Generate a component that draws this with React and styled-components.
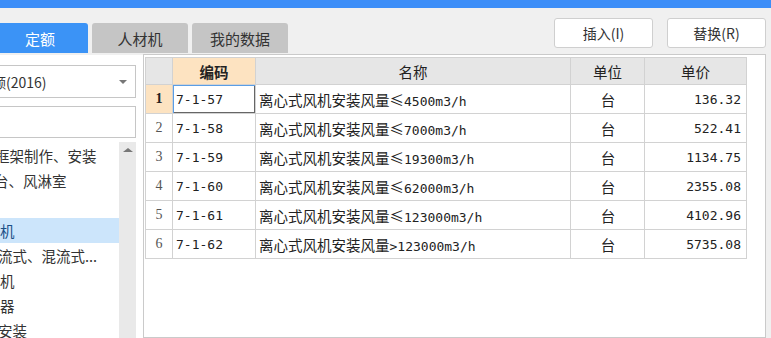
import React from "react"
import styled, { createGlobalStyle } from "styled-components"

const GlobalStyle = createGlobalStyle`
  html, body {
    margin: 0;
    padding: 0;
    background: #f0f0f0;
    overflow: hidden;
  }
  body {
    font-family: "Noto Sans CJK SC", "Liberation Sans", sans-serif;
    color: #222;
  }
`

const CJK = `"Noto Sans CJK SC", sans-serif`
const MIXED = `"DejaVu Sans Mono", "Noto Sans CJK SC", monospace`

/* --- data --- */
const rows = [
  { code: "7-1-57", name: "离心式风机安装风量≤4500m3/h", unit: "台", price: "136.32" },
  { code: "7-1-58", name: "离心式风机安装风量≤7000m3/h", unit: "台", price: "522.41" },
  { code: "7-1-59", name: "离心式风机安装风量≤19300m3/h", unit: "台", price: "1134.75" },
  { code: "7-1-60", name: "离心式风机安装风量≤62000m3/h", unit: "台", price: "2355.08" },
  { code: "7-1-61", name: "离心式风机安装风量≤123000m3/h", unit: "台", price: "4102.96" },
  { code: "7-1-62", name: "离心式风机安装风量>123000m3/h", unit: "台", price: "5735.08" },
]

const treeItems = [
  { text: "框架制作、安装", shift: -5 },
  { text: "台、风淋室", shift: -6 },
  { text: "", shift: 0 },
  { text: "机", shift: 0, active: true },
  { text: "流式、混流式...", shift: -2 },
  { text: "机", shift: 0 },
  { text: "器", shift: 0 },
  { text: "安装", shift: -2 },
]

/* --- layout --- */
const Page = styled.div`
  width: 771px;
  height: 338px;
  display: flex;
  flex-direction: column;
  overflow: hidden;
`
const TopBar = styled.div`
  height: 8px;
  background: #3d8ef8;
  flex: none;
`
const Toolbar = styled.div`
  height: 46px;
  flex: none;
  display: flex;
  justify-content: space-between;
  align-items: flex-start;
`
const Tabs = styled.div`
  display: flex;
  gap: 4px;
  margin-left: -8px;
  padding-top: 15px;
`
const Tab = styled.div`
  width: 96px;
  height: 30px;
  border-radius: 3px 3px 0 0;
  display: flex;
  align-items: center;
  justify-content: center;
  font-family: ${CJK};
  font-size: 15px;
  background: ${p => (p.active ? "#3b93f6" : "#c5c5c5")};
  color: ${p => (p.active ? "#fff" : "#333")};
`
const Actions = styled.div`
  display: flex;
  gap: 14px;
  padding-top: 10px;
  padding-right: 5px;
`
const Button = styled.div`
  width: 97px;
  height: 28px;
  border: 1px solid #cfcfcf;
  border-radius: 3px;
  background: #fff;
  display: flex;
  align-items: center;
  justify-content: center;
  font-family: ${CJK};
  font-size: 14px;
  color: #333;
`
const Body = styled.div`
  flex: 1;
  display: flex;
  min-height: 0;
`

/* --- left panel --- */
const Aside = styled.div`
  width: 143px;
  flex: none;
  background: #fff;
  overflow: hidden;
  margin-top: 1px;
`
const AsideInner = styled.div`
  margin-left: -15px;
  padding: 10px 7px 0 0;
  display: flex;
  flex-direction: column;
  height: 100%;
  box-sizing: border-box;
`
const Select = styled.div`
  height: 31px;
  border: 1px solid #c6c6c6;
  display: flex;
  align-items: center;
  justify-content: space-between;
  padding: 0 8px 0 6px;
  font-family: ${CJK};
  font-size: 14px;
  color: #333;
`
const Caret = styled.span`
  width: 0;
  height: 0;
  border-left: 4px solid transparent;
  border-right: 4px solid transparent;
  border-top: 4px solid #777;
`
const SearchInput = styled.div`
  height: 30px;
  margin-top: 8px;
  border: 1px solid #c6c6c6;
`
const Tree = styled.div`
  flex: 1;
  display: flex;
  margin-top: 4px;
  min-height: 0;
  margin-left: 15px;
`
const TreeRows = styled.div`
  flex: 1;
  overflow: hidden;
  padding-top: 1px;
`
const TreeRow = styled.div`
  height: 25px;
  display: flex;
  align-items: center;
  white-space: nowrap;
  font-family: ${CJK};
  font-size: 14.5px;
  color: ${p => (p.active ? "#1b4f86" : "#333")};
  background: ${p => (p.active ? "#cce5fb" : "transparent")};
  span {
    margin-left: ${p => p.shift}px;
  }
`
const ScrollTrack = styled.div`
  width: 17px;
  flex: none;
  background: #e9e9e9;
  display: flex;
  justify-content: center;
  padding-top: 6px;
`
const ArrowUp = styled.span`
  width: 0;
  height: 0;
  border-left: 5px solid transparent;
  border-right: 5px solid transparent;
  border-bottom: 4px solid #777;
`

/* --- grid --- */
const GridPane = styled.div`
  flex: 1;
  margin-right: 5px;
  background: #fff;
  border: 1px solid #cacaca;
  padding: 2px 0 0 1px;
  min-width: 0;
`
const Table = styled.table`
  border-collapse: collapse;
  table-layout: fixed;
  width: 601px;
  font-family: ${MIXED};
  font-size: 13px;
  color: #222;
`
const Th = styled.th`
  height: 26px;
  padding: 0;
  border: 1px solid #d2d2d2;
  background: ${p => (p.hot ? "#fde3c1" : "#e6e6e6")};
  font-family: ${CJK};
  font-size: 14.5px;
  font-weight: ${p => (p.hot ? 700 : 400)};
  color: #222;
  text-align: center;
`
const Td = styled.td`
  height: 28px;
  padding: 0 ${p => (p.align === "right" ? "5px" : "2px")} 0 3px;
  border: 1px solid #d2d2d2;
  white-space: nowrap;
  overflow: hidden;
  text-align: ${p => p.align || "left"};
  box-shadow: ${p => (p.focus ? "inset 1px 1px 0 #5a9ee6, inset -1px -1px 0 #666" : "none")};
`
const NameText = styled.span`
  font-size: 14.5px;
  font-family: ${CJK};
  & b {
    font-weight: 400;
    font-family: ${MIXED};
    font-size: 13px;
  }
`
const RowNum = styled.td`
  height: 28px;
  padding: 0;
  border: 1px solid #d2d2d2;
  text-align: center;
  background: ${p => (p.hot ? "#fde3c1" : "#fff")};
  font-weight: ${p => (p.hot ? 700 : 400)};
  font-family: "Liberation Serif", serif;
  font-size: 14px;
  color: ${p => (p.hot ? "#222" : "#555")};
`
const UnitText = styled.span`
  font-family: ${CJK};
  font-size: 14.5px;
`

// keep the CJK part and the ≤ sign in the CJK font, the figures in mono
const splitName = name => {
  const m = name.match(/^(.*?风量≤?)(.*)$/)
  return m ? [m[1], m[2]] : [name, ""]
}

const Grid = () =>
<GridPane>
  <Table>
    <colgroup>
      <col style={{ width: 27 }} />
      <col style={{ width: 83 }} />
      <col style={{ width: 315 }} />
      <col style={{ width: 74 }} />
      <col style={{ width: 102 }} />
    </colgroup>
    <thead>
      <tr>
        <Th />
        <Th hot>编码</Th>
        <Th>名称</Th>
        <Th>单位</Th>
        <Th>单价</Th>
      </tr>
    </thead>
    <tbody>
      {rows.map((r, i) => {
        const [head, tail] = splitName(r.name)
        return (
          <tr key={r.code}>
            <RowNum hot={i === 0}>{i + 1}</RowNum>
            <Td focus={i === 0}>{r.code}</Td>
            <Td><NameText>{head}<b>{tail}</b></NameText></Td>
            <Td align="center"><UnitText>{r.unit}</UnitText></Td>
            <Td align="right">{r.price}</Td>
          </tr>
        )
      })}
    </tbody>
  </Table>
</GridPane>

const Sidebar = () =>
<Aside>
  <AsideInner>
    <Select>
      <span>额(2016)</span>
      <Caret />
    </Select>
    <SearchInput />
    <Tree>
      <TreeRows>
        {treeItems.map((t, i) =>
          <TreeRow key={i} active={t.active} shift={t.shift}>
            <span>{t.text}</span>
          </TreeRow>
        )}
      </TreeRows>
      <ScrollTrack><ArrowUp /></ScrollTrack>
    </Tree>
  </AsideInner>
</Aside>

export default function App() {
  return (
    <>
      <GlobalStyle />
      <Page>
        <TopBar />
        <Toolbar>
          <Tabs>
            <Tab active>定额</Tab>
            <Tab>人材机</Tab>
            <Tab>我的数据</Tab>
          </Tabs>
          <Actions>
            <Button>插入(I)</Button>
            <Button>替换(R)</Button>
          </Actions>
        </Toolbar>
        <Body>
          <Sidebar />
          <Grid />
        </Body>
      </Page>
    </>
  )
}
